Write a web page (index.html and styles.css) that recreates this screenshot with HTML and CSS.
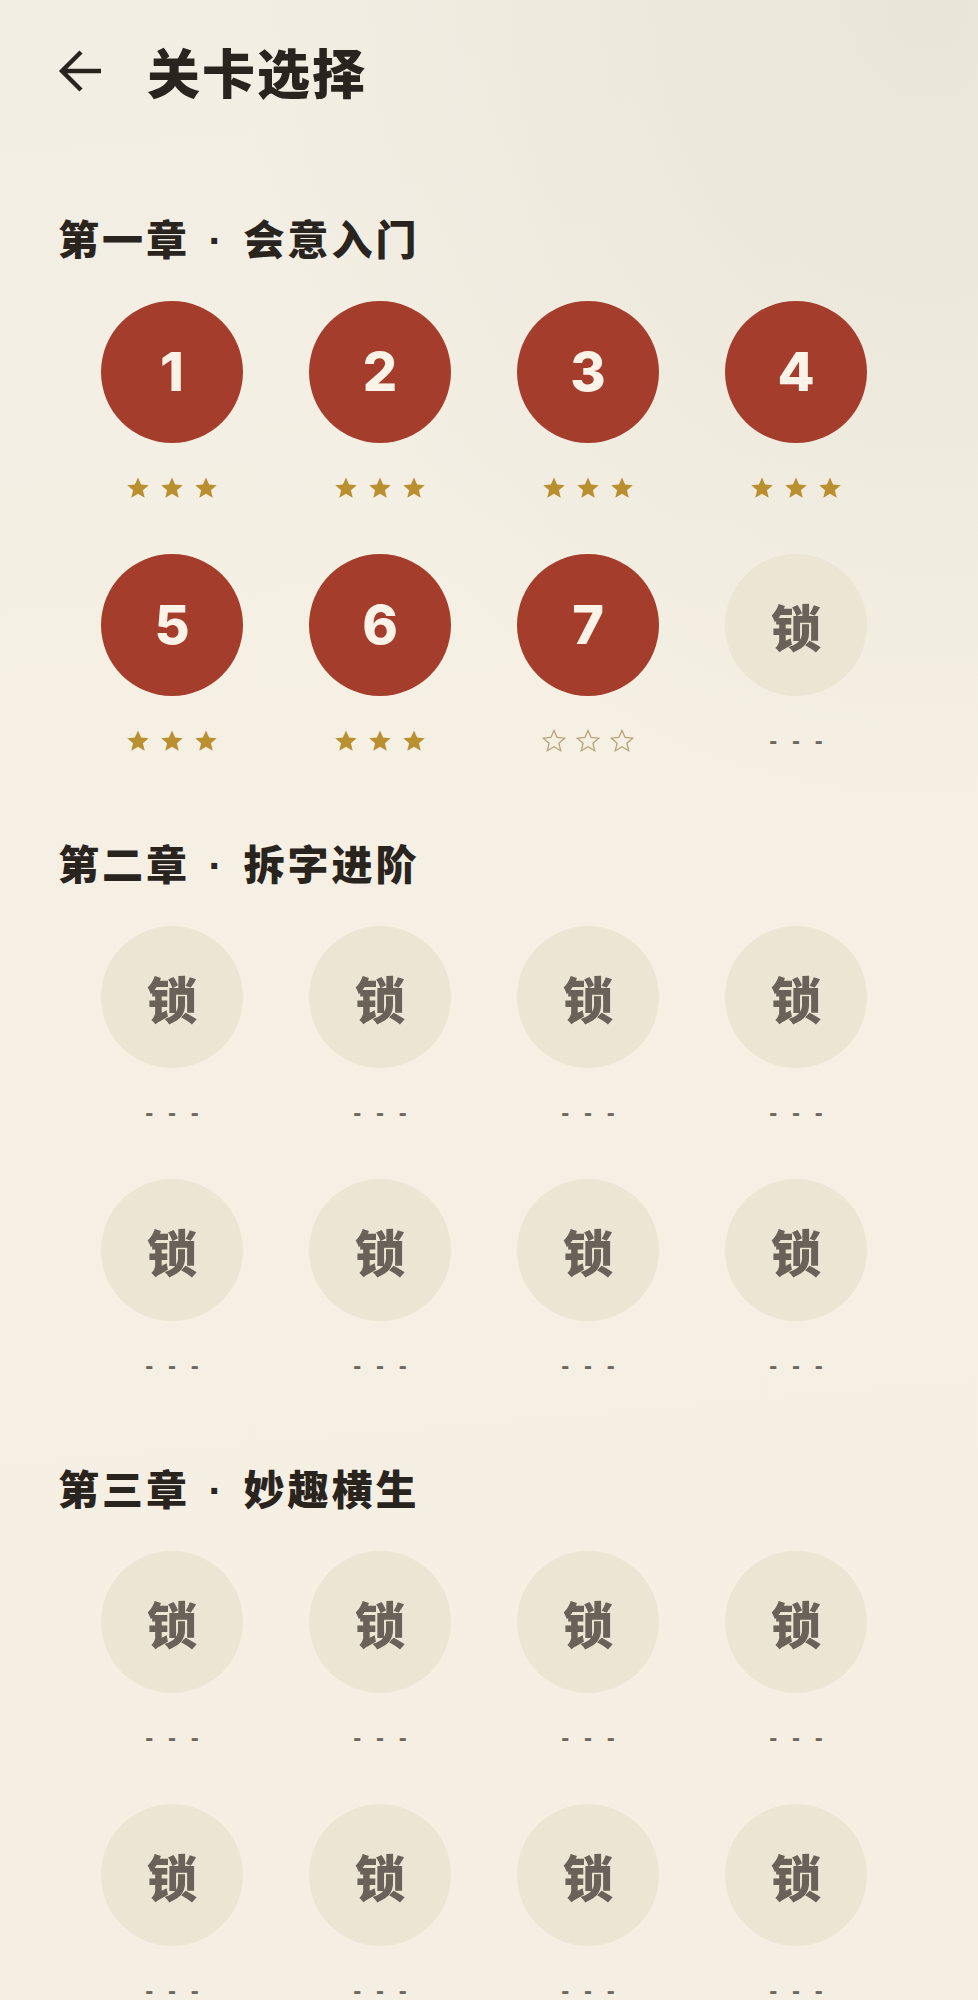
FILE: index.html
```html
<!DOCTYPE html>
<html lang="zh-CN">
<head>
<meta charset="utf-8">
<title>关卡选择</title>
<link rel="stylesheet" href="styles.css">
</head>
<body>
<div class="page">
  <header class="topbar">
    <svg class="back" viewBox="0 0 44 44" width="44" height="44" aria-hidden="true">
      <path d="M43 22 H4 M23 3 L4 22 L23 41" fill="none" stroke="#2a241f" stroke-width="4.4" stroke-linejoin="miter" stroke-linecap="butt"/>
    </svg>
    <h1 class="title">关卡选择</h1>
  </header>

  <section class="chapter">
    <h2 class="chapter-title">第一章<span class="sep"> · </span>会意入门</h2>
    <div class="levels">
      <div class="level"><div class="disc open">1</div><div class="stars"><svg viewBox="0 0 24 24"><path class="sf" d="M12 1.5l3.1 7 7.6.7-5.8 5 1.8 7.5L12 17.8 5.3 21.7l1.8-7.5-5.8-5 7.6-.7z"/></svg><svg viewBox="0 0 24 24"><path class="sf" d="M12 1.5l3.1 7 7.6.7-5.8 5 1.8 7.5L12 17.8 5.3 21.7l1.8-7.5-5.8-5 7.6-.7z"/></svg><svg viewBox="0 0 24 24"><path class="sf" d="M12 1.5l3.1 7 7.6.7-5.8 5 1.8 7.5L12 17.8 5.3 21.7l1.8-7.5-5.8-5 7.6-.7z"/></svg></div></div>
      <div class="level"><div class="disc open">2</div><div class="stars"><svg viewBox="0 0 24 24"><path class="sf" d="M12 1.5l3.1 7 7.6.7-5.8 5 1.8 7.5L12 17.8 5.3 21.7l1.8-7.5-5.8-5 7.6-.7z"/></svg><svg viewBox="0 0 24 24"><path class="sf" d="M12 1.5l3.1 7 7.6.7-5.8 5 1.8 7.5L12 17.8 5.3 21.7l1.8-7.5-5.8-5 7.6-.7z"/></svg><svg viewBox="0 0 24 24"><path class="sf" d="M12 1.5l3.1 7 7.6.7-5.8 5 1.8 7.5L12 17.8 5.3 21.7l1.8-7.5-5.8-5 7.6-.7z"/></svg></div></div>
      <div class="level"><div class="disc open">3</div><div class="stars"><svg viewBox="0 0 24 24"><path class="sf" d="M12 1.5l3.1 7 7.6.7-5.8 5 1.8 7.5L12 17.8 5.3 21.7l1.8-7.5-5.8-5 7.6-.7z"/></svg><svg viewBox="0 0 24 24"><path class="sf" d="M12 1.5l3.1 7 7.6.7-5.8 5 1.8 7.5L12 17.8 5.3 21.7l1.8-7.5-5.8-5 7.6-.7z"/></svg><svg viewBox="0 0 24 24"><path class="sf" d="M12 1.5l3.1 7 7.6.7-5.8 5 1.8 7.5L12 17.8 5.3 21.7l1.8-7.5-5.8-5 7.6-.7z"/></svg></div></div>
      <div class="level"><div class="disc open">4</div><div class="stars"><svg viewBox="0 0 24 24"><path class="sf" d="M12 1.5l3.1 7 7.6.7-5.8 5 1.8 7.5L12 17.8 5.3 21.7l1.8-7.5-5.8-5 7.6-.7z"/></svg><svg viewBox="0 0 24 24"><path class="sf" d="M12 1.5l3.1 7 7.6.7-5.8 5 1.8 7.5L12 17.8 5.3 21.7l1.8-7.5-5.8-5 7.6-.7z"/></svg><svg viewBox="0 0 24 24"><path class="sf" d="M12 1.5l3.1 7 7.6.7-5.8 5 1.8 7.5L12 17.8 5.3 21.7l1.8-7.5-5.8-5 7.6-.7z"/></svg></div></div>
      <div class="level"><div class="disc open">5</div><div class="stars"><svg viewBox="0 0 24 24"><path class="sf" d="M12 1.5l3.1 7 7.6.7-5.8 5 1.8 7.5L12 17.8 5.3 21.7l1.8-7.5-5.8-5 7.6-.7z"/></svg><svg viewBox="0 0 24 24"><path class="sf" d="M12 1.5l3.1 7 7.6.7-5.8 5 1.8 7.5L12 17.8 5.3 21.7l1.8-7.5-5.8-5 7.6-.7z"/></svg><svg viewBox="0 0 24 24"><path class="sf" d="M12 1.5l3.1 7 7.6.7-5.8 5 1.8 7.5L12 17.8 5.3 21.7l1.8-7.5-5.8-5 7.6-.7z"/></svg></div></div>
      <div class="level"><div class="disc open">6</div><div class="stars"><svg viewBox="0 0 24 24"><path class="sf" d="M12 1.5l3.1 7 7.6.7-5.8 5 1.8 7.5L12 17.8 5.3 21.7l1.8-7.5-5.8-5 7.6-.7z"/></svg><svg viewBox="0 0 24 24"><path class="sf" d="M12 1.5l3.1 7 7.6.7-5.8 5 1.8 7.5L12 17.8 5.3 21.7l1.8-7.5-5.8-5 7.6-.7z"/></svg><svg viewBox="0 0 24 24"><path class="sf" d="M12 1.5l3.1 7 7.6.7-5.8 5 1.8 7.5L12 17.8 5.3 21.7l1.8-7.5-5.8-5 7.6-.7z"/></svg></div></div>
      <div class="level"><div class="disc open">7</div><div class="stars"><svg viewBox="0 0 24 24"><path class="se" d="M12 1.5l3.1 7 7.6.7-5.8 5 1.8 7.5L12 17.8 5.3 21.7l1.8-7.5-5.8-5 7.6-.7z"/></svg><svg viewBox="0 0 24 24"><path class="se" d="M12 1.5l3.1 7 7.6.7-5.8 5 1.8 7.5L12 17.8 5.3 21.7l1.8-7.5-5.8-5 7.6-.7z"/></svg><svg viewBox="0 0 24 24"><path class="se" d="M12 1.5l3.1 7 7.6.7-5.8 5 1.8 7.5L12 17.8 5.3 21.7l1.8-7.5-5.8-5 7.6-.7z"/></svg></div></div>
      <div class="level"><div class="disc locked">锁</div><div class="dashes">- - -</div></div>
    </div>
  </section>

  <section class="chapter">
    <h2 class="chapter-title">第二章<span class="sep"> · </span>拆字进阶</h2>
    <div class="levels">
      <div class="level"><div class="disc locked">锁</div><div class="dashes">- - -</div></div>
      <div class="level"><div class="disc locked">锁</div><div class="dashes">- - -</div></div>
      <div class="level"><div class="disc locked">锁</div><div class="dashes">- - -</div></div>
      <div class="level"><div class="disc locked">锁</div><div class="dashes">- - -</div></div>
      <div class="level"><div class="disc locked">锁</div><div class="dashes">- - -</div></div>
      <div class="level"><div class="disc locked">锁</div><div class="dashes">- - -</div></div>
      <div class="level"><div class="disc locked">锁</div><div class="dashes">- - -</div></div>
      <div class="level"><div class="disc locked">锁</div><div class="dashes">- - -</div></div>
    </div>
  </section>

  <section class="chapter">
    <h2 class="chapter-title">第三章<span class="sep"> · </span>妙趣横生</h2>
    <div class="levels">
      <div class="level"><div class="disc locked">锁</div><div class="dashes">- - -</div></div>
      <div class="level"><div class="disc locked">锁</div><div class="dashes">- - -</div></div>
      <div class="level"><div class="disc locked">锁</div><div class="dashes">- - -</div></div>
      <div class="level"><div class="disc locked">锁</div><div class="dashes">- - -</div></div>
      <div class="level"><div class="disc locked">锁</div><div class="dashes">- - -</div></div>
      <div class="level"><div class="disc locked">锁</div><div class="dashes">- - -</div></div>
      <div class="level"><div class="disc locked">锁</div><div class="dashes">- - -</div></div>
      <div class="level"><div class="disc locked">锁</div><div class="dashes">- - -</div></div>
    </div>
  </section>
</div>
</body>
</html>
```

FILE: styles.css
```css
html, body {
  margin: 0;
  padding: 0;
}

body {
  min-height: 2000px;
  background:
    radial-gradient(ellipse 70% 40% at 95% 0%, #e9e5d8 0%, rgba(233,229,216,0) 100%),
    linear-gradient(175deg, #f2eee3 0%, #f6f0e4 45%, #f5efe3 100%);
  font-family: "Noto Sans CJK SC", "Noto Sans", sans-serif;
  color: #2a241f;
}

.page {
  padding: 0 0 40px 58px;
}

.topbar {
  display: flex;
  align-items: center;
  gap: 45px;
  padding-top: 40px;
  height: 62px;
}

.back {
  display: block;
  flex: none;
}

.title {
  margin: 0;
  font-size: 53px;
  font-weight: 900;
  line-height: 62px;
  letter-spacing: 2px;
  color: #2a241f;
}

.chapter {
  margin-top: 82px;
}

.chapter:first-of-type {
  margin-top: 110px;
}

.chapter-title {
  margin: 0;
  height: 50px;
  font-size: 41px;
  font-weight: 900;
  line-height: 50px;
  letter-spacing: 3px;
  color: #2a241f;
  overflow: visible;
}

.sep {
  font-family: "Liberation Sans", sans-serif;
  font-weight: 700;
  line-height: 1;
  white-space: pre;
  word-spacing: 4px;
}

.levels {
  display: grid;
  grid-template-columns: repeat(4, 208px);
  row-gap: 52px;
  margin: 39px 0 0 10px;
}

.level {
  display: flex;
  flex-direction: column;
  align-items: center;
}

.disc {
  width: 142px;
  height: 142px;
  border-radius: 50%;
  display: flex;
  align-items: center;
  justify-content: center;
}

.disc.open {
  background: #a43d2b;
  color: #fbf2e8;
  font-family: "Inter", "Liberation Sans", sans-serif;
  font-weight: 800;
  font-size: 54px;
  line-height: 1;
}

.disc.locked {
  background: #ebe5d4;
  color: #6a6258;
  font-family: "Noto Sans CJK SC", sans-serif;
  font-weight: 900;
  font-size: 50px;
  line-height: 1;
}

.stars {
  display: flex;
  gap: 10px;
  margin-top: 31px;
  height: 28px;
  align-items: center;
}

.stars svg {
  width: 24px;
  height: 24px;
  display: block;
}

.sf {
  fill: #b98f2f;
}

.se {
  fill: none;
  stroke: #b7a276;
  stroke-width: 1.3;
}

.dashes {
  margin-top: 31px;
  height: 28px;
  line-height: 28px;
  font-family: "Liberation Sans", sans-serif;
  font-weight: 700;
  font-size: 24px;
  letter-spacing: 4px;
  padding-left: 4px;
  color: #6f685e;
  white-space: pre;
}
```
